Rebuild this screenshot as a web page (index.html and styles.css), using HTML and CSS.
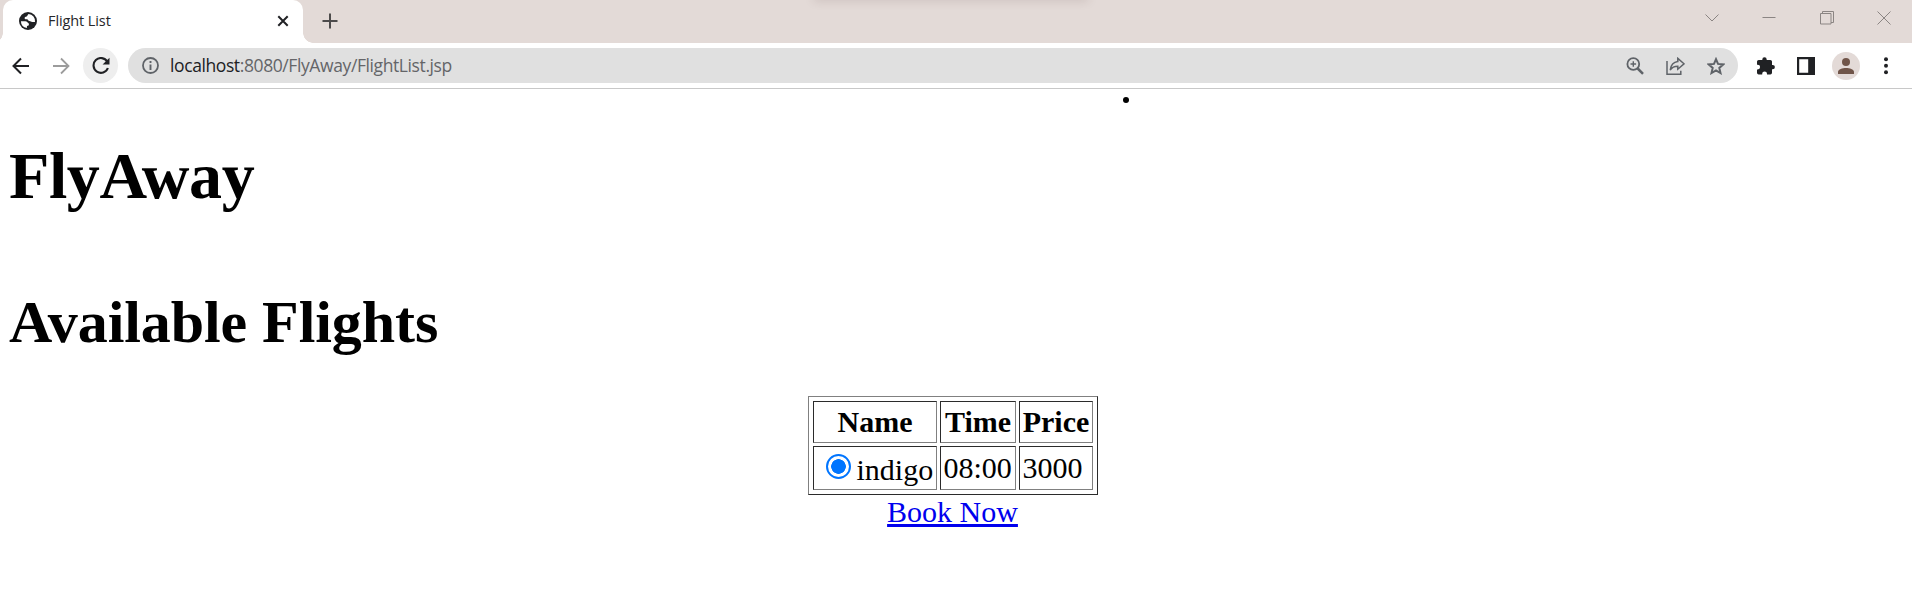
FILE: index.html
```html
<!DOCTYPE html>
<html lang="en">
<head>
<meta charset="utf-8">
<title>Flight List</title>
<link rel="stylesheet" href="styles.css">
</head>
<body>
<header class="browser">
  <div class="tabstrip">
    <div class="tab">
      <svg class="globe" width="18" height="18" viewBox="0 0 18 18"><circle cx="9" cy="9" r="9" fill="#202124"/><path d="M9.6 1.900C8.200 2.600 8.700 4 7.600 4.500 6.500 5 5.600 5 5.600 6.200c0 1 1 1 2.300 1 1.400 0 1 1.700 2.400 1.700 1.400 0 1.600 1 3.100 1h2.600a7.200 7.200 0 0 0-6.400-8zM1.900 9.200a7.200 7.200 0 0 0 6 6.800c.2-1-.3-1.900.7-2.200 1-.2 1.300-.6 1.300-1.600 0-1.300-1-1.200-1.500-2-.5-1-1.500-1-2.900-1z" fill="#fff"/></svg>
      <span class="tab-title">Flight List</span>
      <svg class="tab-close" width="12" height="12" viewBox="0 0 12 12"><path d="M1.300 1.300l9.400 9.400M10.700 1.300L1.300 10.700" stroke="#202124" stroke-width="2" fill="none"/></svg>
    </div>
    <svg class="new-tab" width="16" height="16" viewBox="0 0 16 16"><path d="M8 .5v15M.5 8h15" stroke="#4d4b4b" stroke-width="2"/></svg>
    <div class="window-buttons">
      <svg width="14" height="14" viewBox="0 0 14 14"><path d="M.5 3.500L7 10l6.500-6.500" stroke="#8b8583" fill="none"/></svg>
      <svg width="14" height="14" viewBox="0 0 14 14"><path d="M.5 6.500h13" stroke="#8b8583"/></svg>
      <svg width="14" height="14" viewBox="0 0 14 14"><path d="M.5 2.500h10.500v10.500h-10.500zM2.500 2.500V.5h11V11.500H11" stroke="#8b8583" fill="none"/></svg>
      <svg width="14" height="14" viewBox="0 0 14 14"><path d="M.5.5l13 13M13.500.5l-13 13" stroke="#8b8583"/></svg>
    </div>
    <div class="edge-shadow"></div>
  </div>
  <div class="toolbar">
    <svg class="back" width="18" height="18" viewBox="0 0 18 18"><path d="M17 9H2M9 1.500L1.500 9 9 16.500" stroke="#202124" stroke-width="2" fill="none"/></svg>
    <svg class="forward" width="18" height="18" viewBox="0 0 18 18"><path d="M1 9h15M9 1.500L16.500 9 9 16.500" stroke="#9c9c9c" stroke-width="1.800" fill="none"/></svg>
    <div class="reload"><svg width="18" height="18" viewBox="0 0 18 18"><path d="M15.300 4.600A7.400 7.400 0 1 0 15.900 11" stroke="#202124" stroke-width="2.100" fill="none"/><path d="M17.500.7v6.900h-6.900z" fill="#202124"/></svg></div>
    <div class="omnibox">
      <svg width="17" height="17" viewBox="0 0 17 17"><circle cx="8.500" cy="8.500" r="7.500" stroke="#5f6368" stroke-width="1.800" fill="none"/><path d="M8.500 7.500V13M8.500 4v2" stroke="#5f6368" stroke-width="1.900"/></svg>
      <span class="url"><span class="host">localhost</span>:8080/FlyAway/FlightList.jsp</span>
      <div class="page-actions">
        <svg width="18" height="18" viewBox="0 0 18 18"><circle cx="7.300" cy="7" r="5.900" stroke="#5f6368" stroke-width="1.800" fill="none"/><path d="M11.200 11l5.800 5.800" stroke="#5f6368" stroke-width="2.500"/><path d="M7.300 4.200v5.600M4.500 7h5.600" stroke="#5f6368" stroke-width="1.400"/></svg>
        <svg width="19" height="18" viewBox="0 0 19 18"><path d="M1 4v13.200h13.800v-3.500" stroke="#5f6368" stroke-width="1.500" fill="none"/><path d="M11.800 1.400l6.200 5.400-6.200 5.400V9.300C8.500 9.300 6 10.300 4.200 13 4.800 8.500 7.400 5 11.800 4.500z" stroke="#5f6368" stroke-width="1.500" fill="none"/></svg>
        <svg width="18" height="18" viewBox="0 0 18 18"><path d="M9 2.200l2 4.700 5.200.5-3.900 3.500 1.200 5.100L9 13.300l-4.500 2.700 1.200-5.100-3.900-3.500 5.200-.5z" stroke="#5f6368" stroke-width="2" fill="none"/></svg>
      </div>
    </div>
    <div class="browser-actions">
      <svg width="18" height="18" viewBox="0 0 18 18"><path d="M1.700 2.900H5.300V2.500a2.200 2.200 0 0 1 4.400 0v.4h3.600q1.700 0 1.700 1.700v3.300h.7a2.200 2.200 0 0 1 0 4.400h-.7v3.500q0 1.700-1.700 1.700h-3.300v-.7a2.400 2.400 0 0 0-4.800 0v.7H1.700Q0 17.500 0 15.800v-3.300h.7a2.400 2.400 0 0 0 0-4.800H0V4.600Q0 2.900 1.700 2.900z" fill="#202124"/></svg>
      <svg width="18" height="18" viewBox="0 0 18 18"><path d="M0 0h18v18H0zM2.200 2.200v13.600h9V2.200z" fill="#202124" fill-rule="evenodd"/></svg>
      <div class="avatar"><svg width="16" height="16" viewBox="0 0 16 16"><circle cx="8" cy="4" r="4" fill="#705549"/><path d="M0 16v-2c0-2.700 4.500-4 8-4s8 1.300 8 4v2z" fill="#705549"/></svg></div>
      <svg class="menu" width="4" height="18" viewBox="0 0 4 18"><circle cx="2" cy="2.200" r="2" fill="#202124"/><circle cx="2" cy="8.700" r="2" fill="#202124"/><circle cx="2" cy="15.200" r="2" fill="#202124"/></svg>
    </div>
  </div>
</header>
<main class="page">
  <div class="dot"></div>
  <h1 class="brand">FlyAway</h1>
  <h1 class="heading">Available Flights</h1>
  <div class="results">
    <table class="flights">
      <tr><th class="name">Name</th><th class="time">Time</th><th class="price">Price</th></tr>
      <tr class="flight"><td><label class="choice"><span class="radio"></span>indigo</label></td><td>08:00</td><td>3000</td></tr>
    </table>
    <a class="book" href="#">Book Now</a>
  </div>
</main>
</body>
</html>
```
FILE: styles.css
```css
* { box-sizing: border-box; }
body { margin: 0; background: #fff; color: #000; overflow: hidden; font-family: "Liberation Serif", "Times New Roman", serif; }
svg { display: block; flex: none; }

.browser { height: 89px; border-bottom: 1px solid #c8c8c8; font-family: "Open Sans", "Noto Sans", sans-serif; }
.tabstrip { position: relative; display: flex; height: 43px; background: #e3dad7; }
.tab { position: relative; display: flex; align-items: center; width: 300px; margin-left: 3px; padding: 0 14px 1px 16px; background: #fff; border-radius: 10px 10px 0 0; }
.tab::before, .tab::after { content: ""; position: absolute; bottom: 0; width: 10px; height: 10px; }
.tab::before { left: -10px; background: radial-gradient(circle at 0 0, transparent 9.5px, #fff 10px); }
.tab::after { right: -10px; background: radial-gradient(circle at 100% 0, transparent 9.5px, #fff 10px); }
.tab-title { flex: 1; margin: -2px 0 0 11px; font-size: 14.5px; letter-spacing: -0.1px; color: #26272a; white-space: nowrap; }
.new-tab { margin: 13px 0 0 19px; }
.window-buttons { display: flex; gap: 43.3px; margin: 11px 21px 0 auto; }
.edge-shadow { position: absolute; left: 814px; top: -4px; width: 274px; height: 4px; box-shadow: 0 0 10px rgba(80, 50, 50, .25); }

.toolbar { display: flex; align-items: center; height: 45px; padding-left: 12px; }
.forward { margin-left: 22px; }
.reload { display: flex; align-items: center; justify-content: center; width: 35px; height: 35px; margin-left: 13px; border-radius: 50%; background: #eee; }
.omnibox { display: flex; align-items: center; width: 1610px; height: 35px; margin-left: 10px; padding: 0 13px 0 14px; border-radius: 18px; background: #e0e0e0; }
.url { margin: -2px 0 0 11px; font-size: 17.5px; letter-spacing: -0.4px; color: #646568; white-space: nowrap; }
.host { color: #202124; }
.page-actions { display: flex; align-items: center; gap: 22px; margin-left: auto; }
.browser-actions { display: flex; align-items: center; margin-left: 19px; }
.browser-actions > svg + svg { margin-left: 22px; }
.avatar { display: flex; align-items: center; justify-content: center; width: 28px; height: 28px; margin-left: 17px; border-radius: 50%; background: #e3dad7; }
.browser-actions > .menu { margin-left: 24px; }

.page { position: relative; padding: 49px 6px 0 9px; }
.dot { position: absolute; left: 1123px; top: 8px; width: 6px; height: 6px; border-radius: 50%; background: #000; }
.brand, .heading { margin: 0; font-weight: bold; white-space: nowrap; }
.brand { font-size: 66px; line-height: 76px; letter-spacing: -0.4px; }
.heading { margin-top: 74px; font-size: 60px; line-height: 69px; letter-spacing: -0.08px; }
.results { display: flex; flex-direction: column; align-items: center; margin-top: 39px; padding-right: 10px; font-size: 30px; }
.flights { width: 290px; height: 99px; table-layout: fixed; padding: 1px; border: 1px solid; border-color: #808080 #2b2b2b #2b2b2b #808080; border-spacing: 3px; }
.flights th, .flights td { padding: 0 2px 0 3px; border: 1px solid; border-color: #2b2b2b #808080 #808080 #2b2b2b; line-height: 34px; white-space: nowrap; }
.flights th { height: 42px; }
.flights td { height: 44px; }
.name { width: 124px; }
.time { width: 76px; }
.price { width: 74px; }
.choice { display: flex; align-items: center; padding: 3px 0 0 9px; }
.radio { width: 25px; height: 25px; margin: -6px 6px 0 0; border: 2px solid #0075ff; border-radius: 50%; background: radial-gradient(circle, #0075ff 7px, #fff 7.600px); }
.book { color: #00e; line-height: 34px; text-decoration: underline; }
```
